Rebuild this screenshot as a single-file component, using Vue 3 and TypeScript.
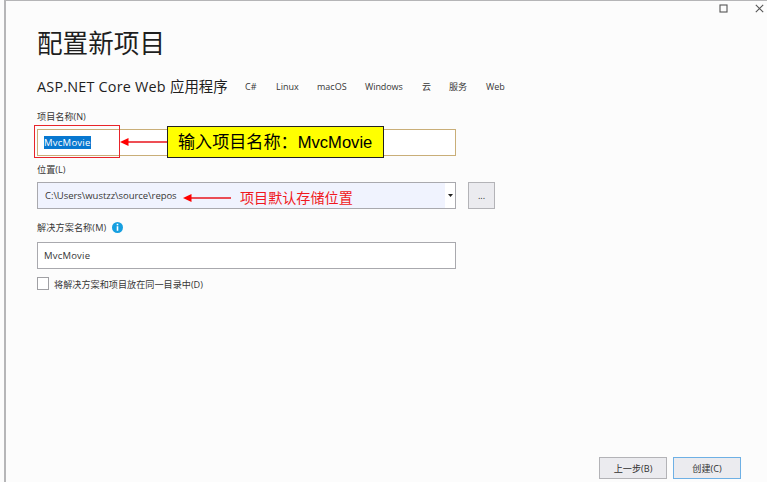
<script setup lang="ts">
import { ref } from 'vue'

interface Tag { id: string; label: string }

const tags: Tag[] = [
  { id: 'csharp', label: 'C#' },
  { id: 'linux', label: 'Linux' },
  { id: 'macos', label: 'macOS' },
  { id: 'windows', label: 'Windows' },
  { id: 'cloud', label: '云' },
  { id: 'service', label: '服务' },
  { id: 'web', label: 'Web' },
]
const projectName = ref('MvcMovie')
const location = ref('C:\\Users\\wustzz\\source\\repos')
const sameFolder = ref(false)
</script>

<template>
  <div class="window">
    <header class="titlebar">
      <svg class="maximize" width="9" height="9" viewBox="0 0 9 9"><rect x="1" y="1" width="7" height="7" fill="none" stroke="#555" stroke-width="1.1" /></svg>
      <svg class="close" width="9" height="9" viewBox="0 0 9 9"><path d="M.8.8 8.2 8.2M8.2.8.8 8.2" stroke="#555" stroke-width="1.1" /></svg>
    </header>

    <main class="content">
      <h1>配置新项目</h1>
      <div class="template-row">
        <h2><span class="latin">ASP.NET Core Web</span><span>应用程序</span></h2>
        <ul class="tags">
          <li v-for="tag in tags" :key="tag.id" :class="tag.id">{{ tag.label }}</li>
        </ul>
      </div>

      <div class="label name-label">项目名称(N)</div>
      <div class="field name-field">
        <span class="selected">{{ projectName }}</span>
        <div class="highlight"></div>
        <svg class="arrow name-arrow" width="48" height="8" viewBox="0 0 48 8"><path d="M7 4H48" stroke="#e8141c" stroke-width="1.4" /><path d="M0 4 8.5 0V8Z" fill="#f00" /></svg>
        <div class="callout">输入项目名称：<span>MvcMovie</span></div>
      </div>

      <div class="label location-label">位置(L)</div>
      <div class="location-row">
        <div class="field location-field">
          <span class="path">{{ location }}</span>
          <svg class="arrow" width="48" height="8" viewBox="0 0 48 8"><path d="M7 4H48" stroke="#e8141c" stroke-width="1.4" /><path d="M0 4 8.5 0V8Z" fill="#f00" /></svg>
          <span class="note">项目默认存储位置</span>
          <span class="dropdown"><svg width="5" height="3" viewBox="0 0 5 3"><path d="M0 0H5L2.5 3Z" fill="#222" /></svg></span>
        </div>
        <button class="browse" type="button">...</button>
      </div>

      <div class="label solution-label">
        <span>解决方案名称(M)</span>
        <svg width="11" height="11" viewBox="0 0 11 11"><circle cx="5.5" cy="5.5" r="5.5" fill="#169fe0" /><path d="M4.7 4.2h1.6v4.6H4.7zM4.7 1.8h1.6v1.5H4.7z" fill="#fff" /></svg>
      </div>
      <div class="field solution-field"><span class="value">{{ projectName }}</span></div>

      <label class="check-row">
        <input v-model="sameFolder" type="checkbox" />
        <span>将解决方案和项目放在同一目录中(D)</span>
      </label>
    </main>

    <footer>
      <button type="button">上一步(B)</button>
      <button class="primary" type="button">创建(C)</button>
    </footer>
  </div>
</template>

<style>
body { margin: 0; background: #fcfcfc; }
</style>

<style scoped>
* { box-sizing: border-box; }
.window {
  width: 763px; height: 482px; margin-left: 4px;
  display: flex; flex-direction: column;
  border-left: 2px solid #b6b6b8; border-top: 1px solid #b5b5b7;
  background: #fcfcfc; color: #363636;
  font: 9.15px/12px "Open Sans", "Noto Sans CJK SC", sans-serif;
  white-space: nowrap;
}
.titlebar { height: 16px; display: flex; justify-content: flex-end; align-items: flex-start; gap: 27px; padding: 3px 3px 0 0; flex: none; }
.content { flex: 1; padding-left: 31px; display: flex; flex-direction: column; }
h1 { margin: 9px 0 0; height: 36px; font-size: 25.6px; line-height: 36px; font-weight: 400; color: #1e1e1e; }
.template-row { display: flex; align-items: center; height: 20px; margin-top: 15px; }
h2 { margin: 0; width: 208px; display: flex; font-size: 14.4px; line-height: 20px; font-weight: 400; color: #1e1e1e; }
.latin { width: 133px; letter-spacing: .2px; }
.tags { display: flex; margin: 0; padding: 0; list-style: none; font-size: 9px; }
.csharp { width: 31px; }
.linux { width: 41px; }
.macos { width: 48px; }
.windows { width: 57px; letter-spacing: -.1px; }
.cloud { width: 27px; }
.service { width: 37px; }
.label { height: 12px; flex: none; }
.name-label { margin-top: 14px; }
.field { position: relative; width: 419px; height: 27px; flex: none; border: 1px solid #a9a9ae; background: #fff; display: flex; align-items: center; padding-left: 6px; font-size: 9.5px; }
.name-field { margin-top: 6px; border-color: #c9ae78; }
.selected { background: #0878d0; color: #fff; height: 13px; line-height: 13px; letter-spacing: .25px; }
.value { letter-spacing: .2px; }
.highlight { position: absolute; left: -4px; top: -5px; width: 86px; height: 33px; border: 1px solid #e8242a; }
.name-arrow { position: absolute; left: 82px; top: 8px; }
.callout { position: absolute; left: 129px; top: -4px; width: 217px; height: 32px; border: 1px solid #222; background: #ff0; color: #000; padding-left: 10px; font: 17.1px/32px "Liberation Sans", "Noto Sans CJK SC", sans-serif; }
.callout span { font-size: 16.6px; }
.location-label { margin-top: 8px; }
.location-row { display: flex; gap: 12px; margin-top: 6px; }
.location-field { background: #f0f3fe; padding-left: 7px; }
.path { width: 138px; letter-spacing: -.04px; }
.location-field .arrow { margin-top: 4px; }
.note { margin-left: 9px; margin-top: 4px; font-size: 14.1px; line-height: 20px; color: #f01820; }
.dropdown { margin-left: auto; width: 10px; height: 25px; background: #fff; display: flex; align-items: center; justify-content: center; }
button { border: 1px solid #b3b3b7; background: #ebebef; color: #303030; font: inherit; padding: 0; border-radius: 0; }
.browse { width: 27px; height: 27px; }
.solution-label { margin-top: 13px; display: flex; align-items: center; }
.solution-label span { width: 75px; letter-spacing: .1px; }
.solution-label svg { margin-top: -1px; }
.solution-field { margin-top: 8px; }
.check-row { display: flex; align-items: center; gap: 5px; height: 13px; margin-top: 8px; }
.check-row input { appearance: none; margin: 0; width: 12px; height: 13px; border: 1px solid #a0a0a4; background: #fff; }
.check-row span { padding-top: 3px; }
footer { display: flex; justify-content: flex-end; gap: 6px; padding: 0 26px 3px 0; }
footer button { width: 68px; height: 22px; padding-top: 1px; }
.primary { border-color: #6eb0e5; }
</style>
